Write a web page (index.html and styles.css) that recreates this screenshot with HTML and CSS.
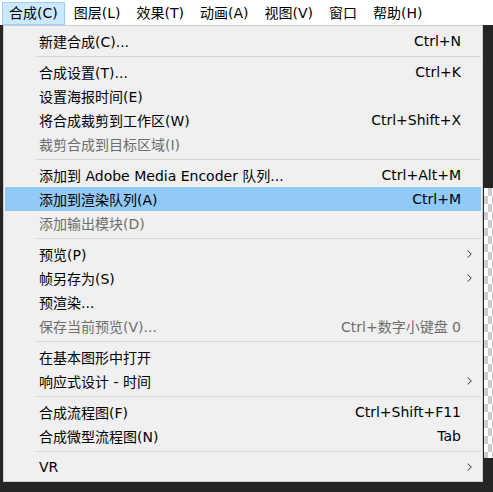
FILE: index.html
```html
<!DOCTYPE html>
<html lang="zh-CN">
<head>
<meta charset="utf-8">
<title>合成菜单</title>
<link rel="stylesheet" href="styles.css">
</head>
<body>
<div class="menubar">
  <div class="mb-item active">合成(C)</div>
  <div class="mb-item">图层(L)</div>
  <div class="mb-item">效果(T)</div>
  <div class="mb-item">动画(A)</div>
  <div class="mb-item">视图(V)</div>
  <div class="mb-item">窗口</div>
  <div class="mb-item">帮助(H)</div>
</div>
<div class="stage">
  <div class="gutter"></div>
  <div class="menu">
    <div class="row"><span class="label">新建合成(C)...</span><span class="key">Ctrl+N</span><span class="arrow"></span></div>
    <div class="sep"></div>
    <div class="row"><span class="label">合成设置(T)...</span><span class="key">Ctrl+K</span><span class="arrow"></span></div>
    <div class="row"><span class="label">设置海报时间(E)</span><span class="key"></span><span class="arrow"></span></div>
    <div class="row"><span class="label">将合成裁剪到工作区(W)</span><span class="key">Ctrl+Shift+X</span><span class="arrow"></span></div>
    <div class="row disabled"><span class="label">裁剪合成到目标区域(I)</span><span class="key"></span><span class="arrow"></span></div>
    <div class="sep"></div>
    <div class="row"><span class="label">添加到 Adobe Media Encoder 队列...</span><span class="key">Ctrl+Alt+M</span><span class="arrow"></span></div>
    <div class="row hover"><span class="label">添加到渲染队列(A)</span><span class="key">Ctrl+M</span><span class="arrow"></span></div>
    <div class="row disabled"><span class="label">添加输出模块(D)</span><span class="key"></span><span class="arrow"></span></div>
    <div class="sep"></div>
    <div class="row"><span class="label">预览(P)</span><span class="key"></span><span class="arrow"><svg width="5" height="8" viewBox="0 0 5 8"><path d="M0.6 0.5 L4.3 4 L0.6 7.5" fill="none" stroke="#333" stroke-width="1"/></svg></span></div>
    <div class="row"><span class="label">帧另存为(S)</span><span class="key"></span><span class="arrow"><svg width="5" height="8" viewBox="0 0 5 8"><path d="M0.6 0.5 L4.3 4 L0.6 7.5" fill="none" stroke="#333" stroke-width="1"/></svg></span></div>
    <div class="row"><span class="label">预渲染...</span><span class="key"></span><span class="arrow"></span></div>
    <div class="row disabled"><span class="label">保存当前预览(V)...</span><span class="key">Ctrl+数字小键盘 0</span><span class="arrow"></span></div>
    <div class="sep"></div>
    <div class="row"><span class="label">在基本图形中打开</span><span class="key"></span><span class="arrow"></span></div>
    <div class="row"><span class="label">响应式设计 - 时间</span><span class="key"></span><span class="arrow"><svg width="5" height="8" viewBox="0 0 5 8"><path d="M0.6 0.5 L4.3 4 L0.6 7.5" fill="none" stroke="#333" stroke-width="1"/></svg></span></div>
    <div class="sep"></div>
    <div class="row"><span class="label">合成流程图(F)</span><span class="key">Ctrl+Shift+F11</span><span class="arrow"></span></div>
    <div class="row"><span class="label">合成微型流程图(N)</span><span class="key">Tab</span><span class="arrow"></span></div>
    <div class="sep"></div>
    <div class="row"><span class="label">VR</span><span class="key"></span><span class="arrow"><svg width="5" height="8" viewBox="0 0 5 8"><path d="M0.6 0.5 L4.3 4 L0.6 7.5" fill="none" stroke="#333" stroke-width="1"/></svg></span></div>
  </div>
  <div class="side">
    <div class="checker"></div>
  </div>
</div>
</body>
</html>
```

FILE: styles.css
```css
html, body {
  margin: 0;
  padding: 0;
  background: #252525;
  width: 493px;
  height: 492px;
  overflow: hidden;
  font-family: "DejaVu Sans", "Noto Sans CJK SC", sans-serif;
  font-size: 14px;
  color: #000;
}

.menubar {
  display: flex;
  gap: 2px;
  height: 25px;
  background: #ffffff;
  padding: 2px 0 0 2px;
  box-sizing: border-box;
}

.mb-item {
  height: 23px;
  line-height: 21px;
  padding: 0 6px;
  border: 1px solid transparent;
  box-sizing: border-box;
  white-space: nowrap;
}

.mb-item.active {
  background: #cce8ff;
  border-color: #99d1ff;
}

.stage {
  display: flex;
  align-items: flex-start;
}

.gutter {
  width: 3px;
  flex: none;
}

.menu {
  width: 480px;
  flex: none;
  box-sizing: border-box;
  background: #f0f0f0;
  border: 1px solid #cccccc;
  padding: 3px 1px 2px 1px;
}

.row {
  display: flex;
  align-items: center;
  height: 24px;
  padding-left: 34px;
  white-space: nowrap;
}

.row .label {
  flex: 1;
}

.row .key {
  text-align: right;
}

.row .arrow {
  width: 20px;
  flex: none;
  display: flex;
  align-items: center;
  padding-left: 6px;
  box-sizing: border-box;
}

.row.hover {
  background: #91c9f7;
}

.row.disabled {
  color: #6d6d6d;
}

.sep {
  height: 7px;
  display: flex;
  align-items: center;
  padding-left: 30px;
}

.sep::before {
  content: "";
  flex: 1;
  height: 1px;
  background: #d7d7d7;
}

.side {
  flex: 1;
  padding-top: 163px;
}

.checker {
  height: 270px;
  margin-left: 1px;
  background-color: #ffffff;
  background-image: conic-gradient(#cccccc 25%, #ffffff 0 50%, #cccccc 0 75%, #ffffff 0);
  background-size: 8px 16px;
}
```
